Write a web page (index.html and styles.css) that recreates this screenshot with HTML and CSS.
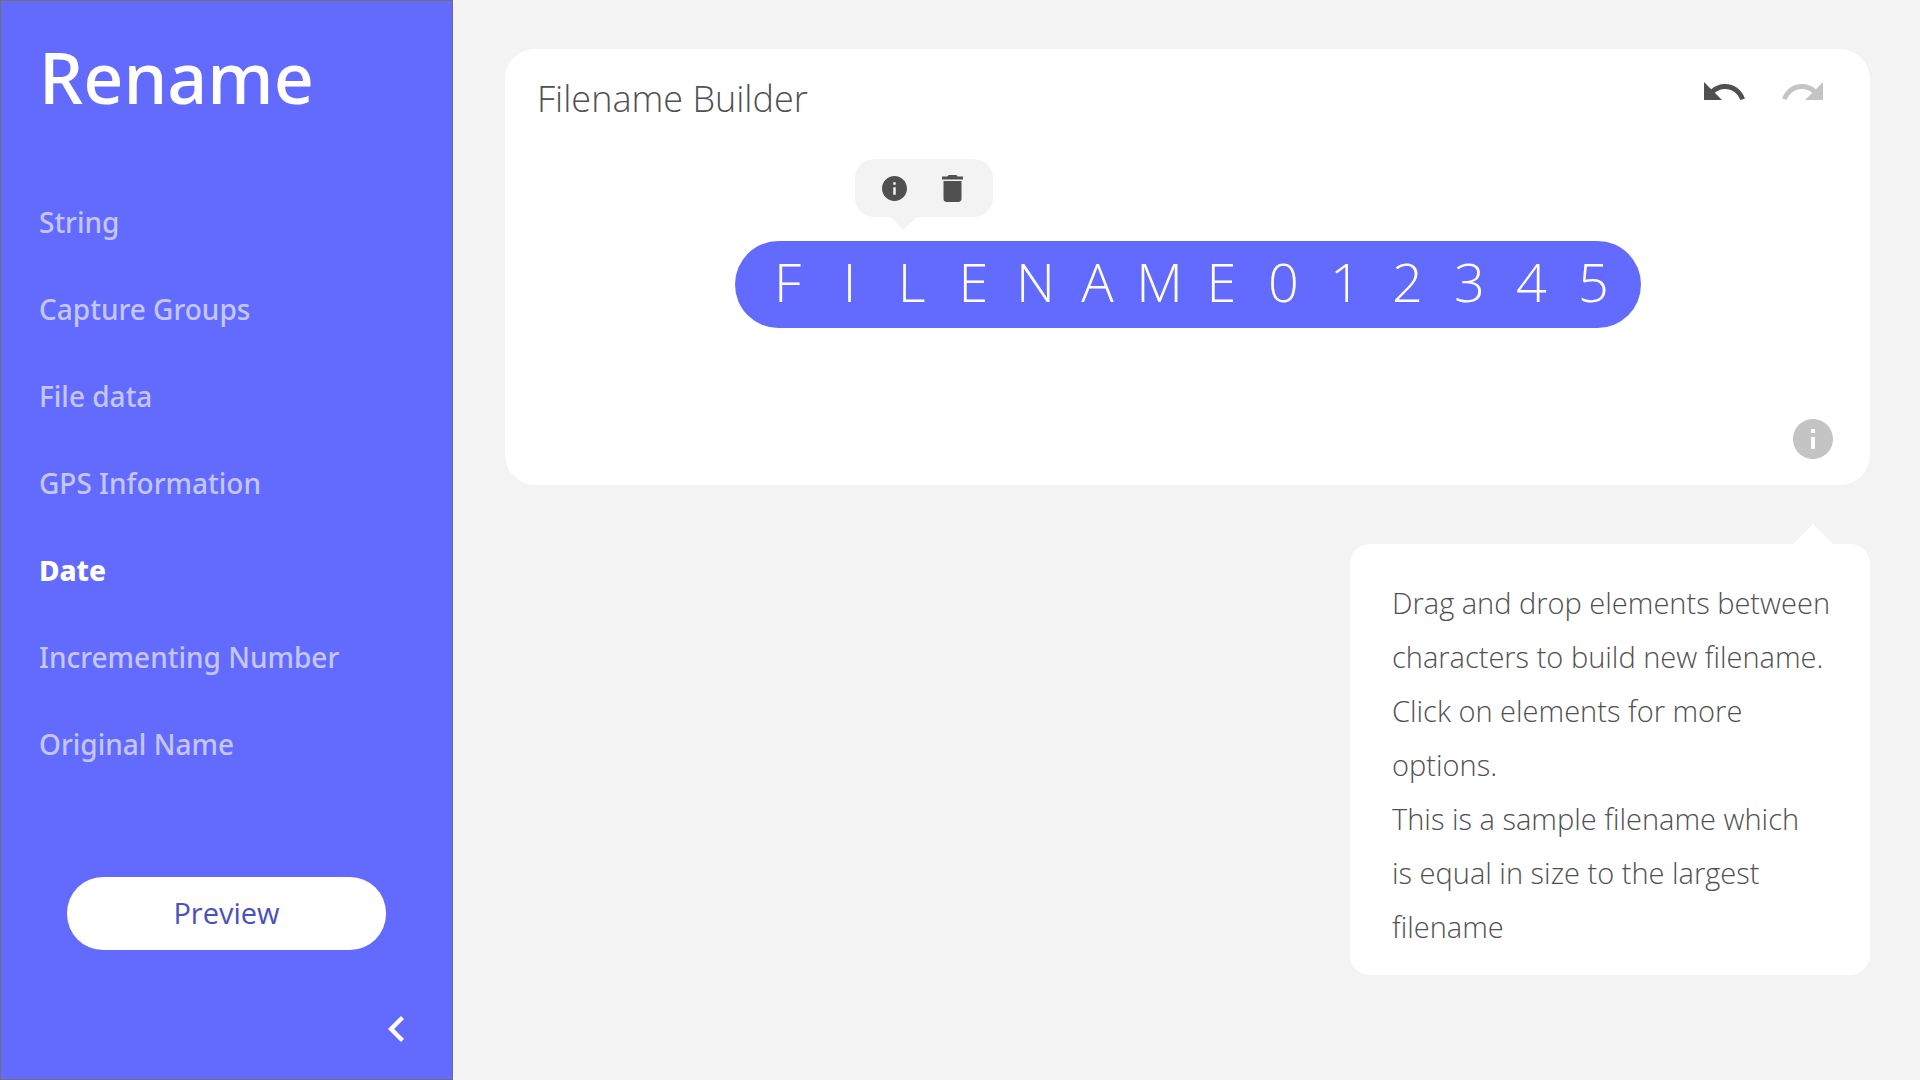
FILE: index.html
```html
<!DOCTYPE html>
<html lang="en">
<head>
<meta charset="utf-8">
<meta name="viewport" content="width=device-width, initial-scale=1">
<title>Rename</title>
<link rel="stylesheet" href="styles.css">
</head>
<body>
<div class="app">
  <aside class="sidebar">
    <h1 class="app-title">Rename</h1>
    <nav class="menu" aria-label="Filename elements">
      <a class="menu-item" href="#string">String</a>
      <a class="menu-item" href="#capture-groups">Capture Groups</a>
      <a class="menu-item" href="#file-data">File data</a>
      <a class="menu-item" href="#gps">GPS Information</a>
      <a class="menu-item is-active" href="#date" aria-current="page">Date</a>
      <a class="menu-item" href="#number">Incrementing Number</a>
      <a class="menu-item" href="#original">Original Name</a>
    </nav>
    <button class="preview" type="button">Preview</button>
    <button class="icon-button collapse" type="button" aria-label="Collapse sidebar">
      <svg width="16" height="26" viewBox="8 6 7.41 12"><path d="M15.41 7.41 14 6l-6 6 6 6 1.41-1.41L10.83 12z"/></svg>
    </button>
  </aside>

  <main class="main">
    <section class="builder">
      <header class="builder-head">
        <h2 class="builder-title">Filename Builder</h2>
        <div class="history">
          <button class="icon-button" type="button" aria-label="Undo">
            <svg width="41" height="18" viewBox="2 7 20.5 9"><path d="M12.5 8c-2.65 0-5.05.99-6.9 2.6L2 7v9h9l-3.62-3.62c1.39-1.16 3.16-1.88 5.12-1.88 3.54 0 6.55 2.31 7.6 5.5l2.37-.78C21.08 11.03 17.15 8 12.5 8z"/></svg>
          </button>
          <button class="icon-button is-muted" type="button" aria-label="Redo">
            <svg width="41" height="18" viewBox="1.5 7 20.5 9"><path d="M18.4 10.6C16.55 8.99 14.15 8 11.5 8c-4.65 0-8.58 3.03-9.96 7.22L3.9 16c1.05-3.19 4.05-5.5 7.6-5.5 1.95 0 3.73.72 5.12 1.88L13 16h9V7l-3.6 3.6z"/></svg>
          </button>
        </div>
      </header>

      <div class="filename">
        <div class="popup">
          <button class="icon-button" type="button" aria-label="Element info">
            <svg width="25" height="25" viewBox="2 2 20 20"><path d="M12 2C6.48 2 2 6.48 2 12s4.48 10 10 10 10-4.480 10-10S17.520 2 12 2zm1 15h-2v-6h2v6zm0-8h-2V7h2v2z"/></svg>
          </button>
          <button class="icon-button" type="button" aria-label="Delete element">
            <svg width="21" height="27" viewBox="5 3 14 18"><path d="M6 19c0 1.100.9 2 2 2h8c1.100 0 2-.9 2-2V7H6v12zM19 4h-3.500l-1-1h-5l-1 1H5v2h14V4z"/></svg>
          </button>
        </div>
        <span class="char">F</span><span class="char">I</span><span class="char">L</span><span class="char">E</span><span class="char">N</span><span class="char">A</span><span class="char">M</span><span class="char">E</span><span class="char">0</span><span class="char">1</span><span class="char">2</span><span class="char">3</span><span class="char">4</span><span class="char">5</span>
      </div>

      <button class="icon-button is-muted help" type="button" aria-label="Help" aria-describedby="help-text">
        <svg width="40" height="40" viewBox="2 2 20 20"><path d="M12 2C6.480 2 2 6.480 2 12s4.480 10 10 10 10-4.480 10-10S17.520 2 12 2zm1 15h-2v-6h2v6zm0-8h-2V7h2v2z"/></svg>
      </button>
    </section>

    <div class="tip" id="help-text" role="tooltip">
      <p>Drag and drop elements between characters to build new filename. Click on elements for more options.</p>
      <p>This is a sample filename which is&nbsp;equal in size to the largest filename</p>
    </div>
  </main>
</div>
</body>
</html>
```
FILE: styles.css
```css
:root {
  --accent: #636bff;
  --surface: #f3f3f3;
  --ink: #505050;
  --muted: #c4c4c4;
}

*, *::before, *::after { box-sizing: border-box; }

body {
  margin: 0;
  background: var(--surface);
  color: var(--ink);
  font-family: "Open Sans", "Noto Sans", sans-serif;
  font-size: 29px;
}

h1, h2, p { margin: 0; }

svg { display: block; fill: currentColor; }

button {
  border: 0;
  cursor: pointer;
  font: inherit;
}

.icon-button {
  padding: 0;
  background: none;
  color: var(--ink);
}

.icon-button.is-muted { color: var(--muted); }

.app {
  display: flex;
  min-height: 100vh;
}

/* Sidebar */
.sidebar {
  display: flex;
  flex: 0 0 453px;
  flex-direction: column;
  padding: 26px 38px 37px;
  border: 1px solid #707070;
  background: var(--accent);
  color: #fff;
}

.app-title,
.menu {
  font-family: "Noto Sans", "Open Sans", sans-serif;
  font-weight: 500;
}

.app-title {
  font-size: 70px;
  line-height: 100px;
}

.menu {
  display: flex;
  flex-direction: column;
  margin-top: 52px;
  font-size: 28px;
}

.menu-item {
  color: #c4c7ff;
  line-height: 87px;
  text-decoration: none;
}

.menu-item.is-active {
  color: #fff;
  font-weight: 800;
}

.preview {
  height: 73px;
  margin: 89px 28px 0;
  padding: 0 0 3px;
  border-radius: 36px;
  background: #fff;
  color: #4a50bd;
}

.collapse {
  align-self: flex-end;
  margin: auto 10px 0 0;
  color: #fff;
}

/* Builder */
.main {
  display: flex;
  flex: 1;
  flex-direction: column;
  min-width: 0;
  padding: 49px 50px 49px 52px;
}

.builder {
  display: flex;
  flex-direction: column;
  min-height: 436px;
  padding: 25px 32px 26px;
  border-radius: 30px;
  background: #fff;
}

.builder-head {
  display: flex;
  align-items: flex-start;
  justify-content: space-between;
}

.builder-title {
  font-size: 36px;
  font-weight: 300;
  line-height: 50px;
}

.history {
  display: flex;
  gap: 37px;
  padding: 8px 15px 0 0;
}

.filename {
  position: relative;
  display: grid;
  grid-template-columns: repeat(14, 62px);
  align-self: center;
  margin-top: 117px;
  padding: 0 16px 6px 22px;
  border-radius: 44px;
  background: var(--accent);
  color: #fff;
  font-size: 54px;
  font-weight: 300;
  line-height: 81px;
  text-align: center;
}

.popup {
  position: absolute;
  bottom: calc(100% + 24px);
  left: 120px;
  display: flex;
  align-items: center;
  justify-content: center;
  gap: 35px;
  width: 138px;
  height: 58px;
  padding-right: 3px;
  border-radius: 20px;
  background: var(--surface);
}

.popup::after {
  position: absolute;
  top: 100%;
  left: 36px;
  width: 26px;
  height: 13px;
  background: var(--surface);
  clip-path: polygon(0 0, 100% 0, 50% 100%);
  content: "";
}

.help {
  align-self: flex-end;
  margin: auto 5px 0 0;
}

/* Help tooltip */
.tip {
  position: relative;
  align-self: flex-end;
  width: 520px;
  margin-top: 59px;
  padding: 32px 28px 21px 42px;
  border-radius: 20px;
  background: #fff;
  font-weight: 300;
  line-height: 54px;
}

.tip::before {
  position: absolute;
  right: 37px;
  bottom: 100%;
  width: 40px;
  height: 20px;
  background: #fff;
  clip-path: polygon(50% 0, 100% 100%, 0 100%);
  content: "";
}
```
